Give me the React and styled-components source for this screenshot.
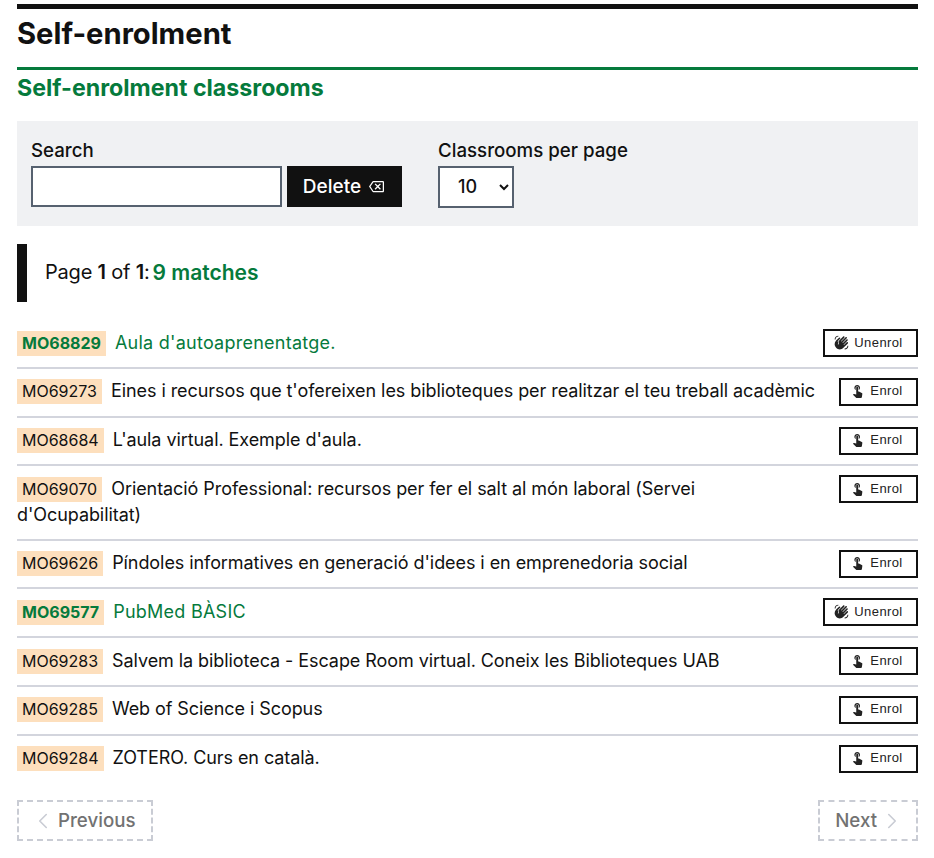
import React from "react";
import styled, { createGlobalStyle } from "styled-components";
import { MdOutlineBackspace, MdTouchApp, MdWavingHand } from "react-icons/md";
import { ChevronLeft, ChevronRight } from "lucide-react";

const GlobalStyle = createGlobalStyle`
  html, body {
    margin: 0;
    background: #fff;
  }
  body {
    font-family: Inter, "Liberation Sans", sans-serif;
    color: #111;
  }
`;

const Page = styled.div`
  padding: 4px 16px 0 17px;
`;

const MainTitle = styled.h1`
  margin: 0;
  border-top: 5px solid #111;
  height: 63px;
  padding-top: 7px;
  box-sizing: border-box;
  font-size: 29.2px;
  line-height: 36px;
  font-weight: 700;
`;

const SubTitle = styled.h2`
  margin: 0;
  border-top: 3px solid #057a3c;
  height: 54px;
  box-sizing: border-box;
  padding-top: 3px;
  font-size: 23.2px;
  line-height: 30px;
  font-weight: 700;
  color: #057a3c;
`;

const FilterPanel = styled.form`
  display: flex;
  gap: 36px;
  height: 105px;
  box-sizing: border-box;
  padding: 19px 14px 0;
  background: #f0f1f3;
`;

const Field = styled.div`
  display: flex;
  flex-direction: column;
  gap: 4px;
`;

const FieldLabel = styled.label`
  font-size: 18.7px;
  line-height: 22px;
  font-weight: 500;
`;

const FieldRow = styled.div`
  display: flex;
  gap: 5px;
`;

const SearchInput = styled.input`
  width: 251px;
  height: 41px;
  box-sizing: border-box;
  border: 2px solid #56616f;
  background: #fff;
  padding: 0 8px;
`;

const DeleteButton = styled.button`
  display: flex;
  align-items: center;
  justify-content: center;
  gap: 8px;
  width: 115px;
  height: 41px;
  border: 0;
  background: #111;
  color: #fff;
  font-family: inherit;
  font-size: 19px;
  font-weight: 500;
  padding: 0 8px 1px 6px;
`;

const PerPageSelect = styled.select`
  width: 76px;
  height: 42px;
  box-sizing: border-box;
  border: 2px solid #56616f;
  border-radius: 0;
  background: #fff;
  padding: 0 0 2px 14px;
  font-family: inherit;
  font-size: 18px;
  font-weight: 500;
  color: #111;
`;

const Summary = styled.p`
  display: flex;
  align-items: center;
  gap: 3px;
  margin: 18px 0 18px;
  height: 58px;
  box-sizing: border-box;
  padding: 0 0 2px 18px;
  border-left: 10px solid #111;
  font-size: 20px;
  letter-spacing: -0.2px;
  b {
    font-weight: 600;
  }
`;

const Matches = styled.span`
  color: #057a3c;
  font-size: 21px;
  font-weight: 600;
  letter-spacing: 0;
`;

const ClassList = styled.ul`
  list-style: none;
  margin: 0;
  padding: 0;
`;

const ClassRow = styled.li`
  display: flex;
  justify-content: space-between;
  align-items: flex-start;
  gap: 22px;
  padding: 9px 0 9.8px;
  border-bottom: 2px solid #d3d5dd;
  &:last-child {
    border-bottom: 0;
  }
`;

const ClassName = styled.div`
  padding-top: 0.5px;
  font-size: 18px;
  line-height: 26.4px;
  letter-spacing: ${(p) => (p.$enrolled ? "0.25px" : "-0.07px")};
  color: ${(p) => (p.$enrolled ? "#057a3c" : "#111")};
`;

const Code = styled.span`
  display: inline-block;
  margin-right: 9px;
  padding: 0 5px;
  background: #fddfbd;
  line-height: 25px;
  font-weight: ${(p) => (p.$enrolled ? 700 : 400)};
  font-size: 16px;
  letter-spacing: 0;
`;

const EnrolButton = styled.button`
  flex: none;
  display: flex;
  align-items: center;
  justify-content: center;
  gap: 5px;
  width: ${(p) => (p.$enrolled ? "95px" : "79px")};
  height: 28px;
  box-sizing: border-box;
  border: 2px solid #111;
  background: #fff;
  color: #222;
  font-family: "Liberation Sans", Arial, sans-serif;
  font-size: 13px;
  letter-spacing: 0.4px;
  padding: 0 4px 2px 0;
`;

const Pager = styled.nav`
  display: flex;
  justify-content: space-between;
  margin-top: 18px;
`;

const PagerLink = styled.span`
  display: flex;
  align-items: center;
  gap: 6px;
  height: 41px;
  box-sizing: border-box;
  padding: 0 15px;
  border: 2px dashed #c9ccd4;
  color: #727272;
  font-size: 18.7px;
  font-weight: 500;
  svg {
    color: #c9ccd4;
  }
  svg:first-child {
    margin-left: -4px;
  }
  svg:last-child {
    margin-right: -4px;
  }
`;

const classrooms = [
  { code: "MO68829", name: "Aula d'autoaprenentatge.", enrolled: true },
  { code: "MO69273", name: "Eines i recursos que t'ofereixen les biblioteques per realitzar el teu treball acadèmic" },
  { code: "MO68684", name: "L'aula virtual. Exemple d'aula." },
  { code: "MO69070", name: "Orientació Professional: recursos per fer el salt al món laboral (Servei d'Ocupabilitat)" },
  { code: "MO69626", name: "Píndoles informatives en generació d'idees i en emprenedoria social" },
  { code: "MO69577", name: "PubMed BÀSIC", enrolled: true },
  { code: "MO69283", name: "Salvem la biblioteca - Escape Room virtual. Coneix les Biblioteques UAB" },
  { code: "MO69285", name: "Web of Science i Scopus" },
  { code: "MO69284", name: "ZOTERO. Curs en català." },
];

export default function App() {
  return (
    <Page>
      <GlobalStyle />
      <MainTitle>Self-enrolment</MainTitle>
      <SubTitle>Self-enrolment classrooms</SubTitle>
      <FilterPanel>
        <Field>
          <FieldLabel htmlFor="search">Search</FieldLabel>
          <FieldRow>
            <SearchInput id="search" type="text" />
            <DeleteButton type="button">
              Delete <MdOutlineBackspace size={15} />
            </DeleteButton>
          </FieldRow>
        </Field>
        <Field>
          <FieldLabel htmlFor="perpage">Classrooms per page</FieldLabel>
          <FieldRow>
            <PerPageSelect id="perpage" defaultValue="10">
              <option>10</option>
              <option>25</option>
              <option>50</option>
            </PerPageSelect>
          </FieldRow>
        </Field>
      </FilterPanel>
      <Summary>
        <span>
          Page <b>1</b> of <b>1</b>:
        </span>
        <Matches>9 matches</Matches>
      </Summary>
      <ClassList>
        {classrooms.map((c) => (
          <ClassRow key={c.code}>
            <ClassName $enrolled={c.enrolled}>
              <Code $enrolled={c.enrolled}>{c.code}</Code>
              {c.name}
            </ClassName>
            <EnrolButton $enrolled={c.enrolled} type="button">
              {c.enrolled ? <MdWavingHand size={15} /> : <MdTouchApp size={15} />}
              {c.enrolled ? "Unenrol" : "Enrol"}
            </EnrolButton>
          </ClassRow>
        ))}
      </ClassList>
      <Pager>
        <PagerLink>
          <ChevronLeft size={26} strokeWidth={1.5} />
          Previous
        </PagerLink>
        <PagerLink>
          Next
          <ChevronRight size={26} strokeWidth={1.5} />
        </PagerLink>
      </Pager>
    </Page>
  );
}
